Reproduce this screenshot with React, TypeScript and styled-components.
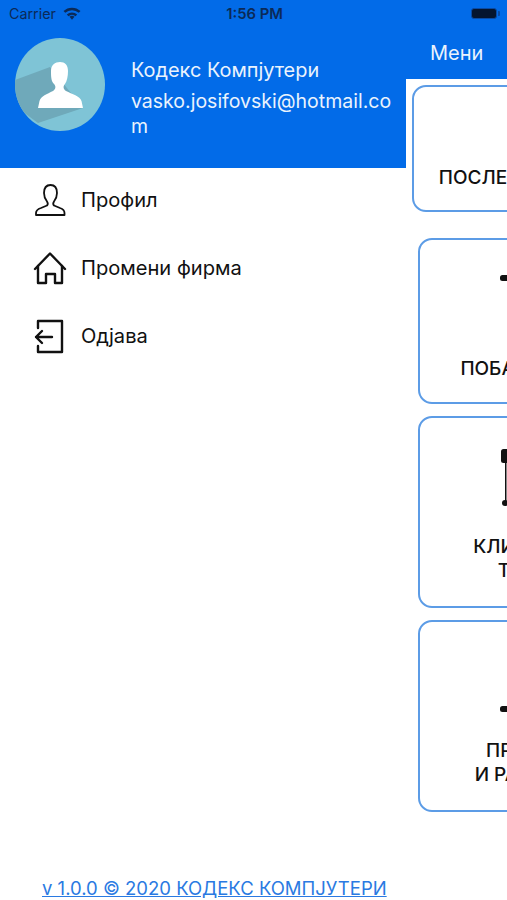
import React from "react";
import styled, { createGlobalStyle } from "styled-components";

const Global = createGlobalStyle`
  html, body { margin: 0; padding: 0; background: #fff; }
  body { font-family: Inter, "Noto Sans", sans-serif; }
  * { box-sizing: border-box; }
`;

const Screen = styled.div`
  width: 507px;
  height: 900px;
  display: flex;
  flex-direction: column;
  overflow: hidden;
  background: #fff;
`;

const StatusBar = styled.div`
  height: 27px;
  flex: none;
  display: grid;
  grid-template-columns: 1fr auto 1fr;
  align-items: center;
  padding: 0 7px 0 9px;
  background: #026be8;
  color: #0b2a58;
  font-size: 14.3px;
`;

const Carrier = styled.div`
  display: flex;
  align-items: center;
  gap: 7px;
`;

const Clock = styled.div`
  font-weight: 600;
  font-size: 14.8px;
`;

const Battery = styled.div`
  justify-self: end;
  display: flex;
  align-items: center;
  gap: 1px;
`;

const BatteryBody = styled.div`
  width: 26px;
  height: 11px;
  border-radius: 3px;
  background: #05152f;
  border: 1px solid #0a4aa3;
`;

const BatteryCap = styled.div`
  width: 2px;
  height: 5px;
  background: #0a4aa3;
  border-radius: 0 1px 1px 0;
`;

const Body = styled.div`
  flex: 1;
  display: flex;
  min-height: 0;
`;

const Drawer = styled.aside`
  width: 406px;
  flex: none;
  display: flex;
  flex-direction: column;
  background: #fff;
`;

const Profile = styled.div`
  height: 141px;
  flex: none;
  display: flex;
  align-items: flex-start;
  padding: 11px 0 0 15px;
  background: #026be8;
  color: #eaf3fd;
`;

const Avatar = styled.svg`
  width: 90px;
  height: 93px;
  flex: none;
`;

const ProfileText = styled.div`
  margin: 20px 0 0 26px;
  width: 262px;
  font-size: 19.5px;
  line-height: 25px;
  overflow-wrap: anywhere;
`;

const ProfileName = styled.div`
  margin-bottom: 6px;
  font-size: 19.9px;
`;

const Nav = styled.nav`
  display: flex;
  flex-direction: column;
  padding: 14px 0 0 33px;
  gap: 32px;
`;

const NavItem = styled.div`
  height: 36px;
  display: flex;
  align-items: center;
  gap: 14px;
  font-size: 20.1px;
  color: #111;
`;

const NavIcon = styled.svg`
  width: 34px;
  height: 36px;
  flex: none;
  fill: none;
  stroke: #111;
  stroke-linejoin: round;
  stroke-linecap: round;
`;

const Version = styled.a`
  margin-top: auto;
  padding-left: 42px;
  height: 23px;
  font-size: 18.5px;
  line-height: 23px;
  color: #2a7ae2;
  text-decoration: underline;
  white-space: nowrap;
`;

const Main = styled.main`
  flex: 1;
  min-width: 0;
  display: flex;
  flex-direction: column;
  overflow: hidden;
`;

const MainHeader = styled.header`
  height: 52px;
  flex: none;
  padding: 13px 0 0 24px;
  background: #026be8;
  color: #eaf3fd;
  font-size: 20px;
  line-height: 26px;
`;

const Cards = styled.div`
  display: flex;
  flex-direction: column;
  padding-top: 6px;
`;

const Card = styled.div<{ $width: number; $height: number; $inset: number; $gap: number; $pad: number }>`
  width: ${(p) => p.$width}px;
  height: ${(p) => p.$height}px;
  margin: 0 0 ${(p) => p.$gap}px ${(p) => p.$inset}px;
  padding-top: ${(p) => p.$pad}px;
  display: flex;
  flex-direction: column;
  align-items: center;
  border: 2px solid #5c9ce6;
  border-radius: 14px;
  background: #fff;
`;

const CardIcon = styled.svg`
  width: 60px;
  height: 60px;
  flex: none;
  fill: #111;
  stroke: none;
`;

const CardLabel = styled.div<{ $bottom: number }>`
  margin-top: auto;
  margin-bottom: ${(p) => p.$bottom}px;
  font-size: 19px;
  line-height: 24px;
  font-weight: 500;
  color: #111;
  text-align: center;
  white-space: pre;
`;

export default function App() {
  return (
    <Screen>
      <Global />
      <StatusBar>
        <Carrier>
          Carrier
          <svg width="18" height="13" viewBox="0 0 19 14">
            <g fill="none" stroke="#0b2a58" strokeWidth="2.700">
              <path d="M1.300 5.300 A12 12 0 0 1 17.700 5.300" />
              <path d="M4.800 9 A7 7 0 0 1 14.200 9" />
            </g>
            <path d="M6.800 10.600 A4 4 0 0 1 12.200 10.600 L9.500 13.800 Z" fill="#0b2a58" />
          </svg>
        </Carrier>
        <Clock>1:56 PM</Clock>
        <Battery>
          <BatteryBody />
          <BatteryCap />
        </Battery>
      </StatusBar>
      <Body>
        <Drawer>
          <Profile>
            <Avatar viewBox="0 0 90 93">
              <defs>
                <clipPath id="disc">
                  <ellipse cx="45" cy="46.500" rx="45" ry="46.500" />
                </clipPath>
              </defs>
              <ellipse cx="45" cy="46.500" rx="45" ry="46.500" fill="#7fc4d6" />
              <path d="M0 42 L35 29 L68 70 L23 85 L0 68 Z" fill="#6fa9ba" clipPath="url(#disc)" />
              <path
                d="M23 70 L24.500 63 C26 58 32 56 38 53 C41 51 41 48 39 46 C36 43 36 38 36 33 C36 27 40 24 45 24 C50 24 53 27 53 33 C53 38 52 43 50 46 C48 48 48 51 51 53 C57 56 65 58 66.500 63 L68 70 Z"
                fill="#fff"
              />
            </Avatar>
            <ProfileText>
              <ProfileName>Кодекс Компјутери</ProfileName>
              vasko.josifovski@hotmail.com
            </ProfileText>
          </Profile>
          <Nav>
            <NavItem>
              <NavIcon viewBox="0 0 34 36" strokeWidth="1.800">
                <path d="M3 33 v-2 c0-3 2-4 5-5 l6-2.500 c1-1 1-2.500 0-4 c-2-2.500-3-5-3-8.500 C11 6 13.500 3 17.500 3 S24 6 24 11 c0 3.500-1 6-3 8.500 c-1 1.500-1 3 0 4 l6 2.500 c3 1 4.500 2 4.500 5 v2 Z" />
              </NavIcon>
              Профил
            </NavItem>
            <NavItem>
              <NavIcon viewBox="0 0 34 36" strokeWidth="2.400">
                <path d="M2 19 L17 3.500 L32 19" />
                <path d="M5 16 V33 H13 V24 H22 V33 H29 V16" />
              </NavIcon>
              Промени фирма
            </NavItem>
            <NavItem>
              <NavIcon viewBox="0 0 34 36" strokeWidth="2.400">
                <path d="M5 10 V3 H29 V34 H5 V28" />
                <path d="M19 19 H3 M9 13 L3 19 L9 25" />
              </NavIcon>
              Одјава
            </NavItem>
          </Nav>
          <Version>v 1.0.0 © 2020 КОДЕКС КОМПЈУТЕРИ</Version>
        </Drawer>
        <Main>
          <MainHeader>Мени</MainHeader>
          <Cards>
            <Card $width={236} $height={127} $inset={6} $gap={26} $pad={0}>
              <CardLabel $bottom={20}>ПОСЛЕДНИ ВЕСТИ</CardLabel>
            </Card>
            <Card $width={224} $height={166} $inset={12} $gap={12} $pad={16}>
              <CardIcon viewBox="0 0 60 60">
                <rect x="0" y="19" width="20" height="6" rx="2.500" />
              </CardIcon>
              <CardLabel $bottom={21}>ПОБАРУВАЊА</CardLabel>
            </Card>
            <Card $width={224} $height={192} $inset={12} $gap={12} $pad={30}>
              <CardIcon viewBox="0 0 60 60">
                <rect x="1" y="1" width="12" height="14" rx="2.500" />
                <rect x="5" y="15" width="1.500" height="38" />
                <circle cx="5" cy="55" r="3" />
              </CardIcon>
              <CardLabel $bottom={23}>{"КЛИЕНТИ И\nТОВАР"}</CardLabel>
            </Card>
            <Card $width={224} $height={192} $inset={12} $gap={0} $pad={57}>
              <CardIcon viewBox="0 0 60 60">
                <rect x="0" y="27" width="20" height="6" rx="2.500" />
              </CardIcon>
              <CardLabel $bottom={25}>{"ПРЕГЛЕД\nИ РАЗЛИКА"}</CardLabel>
            </Card>
          </Cards>
        </Main>
      </Body>
    </Screen>
  );
}
